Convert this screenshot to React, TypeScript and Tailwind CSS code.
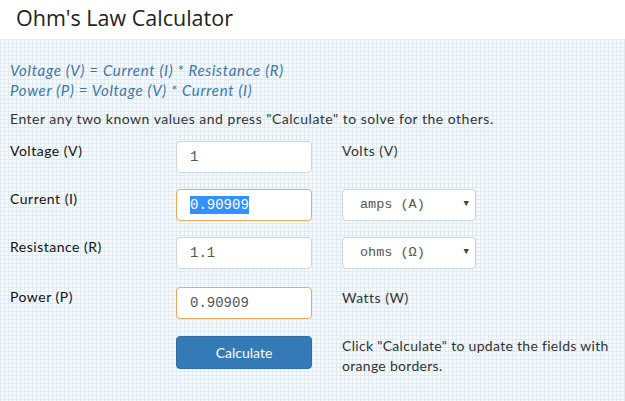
const hand = "font-['Lato','Open_Sans',sans-serif]";
const mono = "font-['Liberation_Mono','DejaVu_Sans_Mono',monospace]";

function Field({ value, orange, selected }: { value: string; orange?: boolean; selected?: boolean }) {
  return (
    <div
      className={`w-[136px] h-[32px] rounded-[4px] bg-white border flex items-center pl-[13px] text-[14px] text-[#555] ${mono} ${
        orange ? "border-[#eaa95c]" : "border-[#d0d6db]"
      }`}
    >
      {selected ? <span className="bg-[#3390ff] text-white leading-[18px]">{value}</span> : value}
    </div>
  );
}

function Select({ value }: { value: string }) {
  return (
    <div className={`w-[134px] h-[32px] rounded-[4px] bg-white border border-[#d0d6db] flex items-center justify-between pl-[17px] pr-[6px] text-[13.5px] text-[#555] ${mono}`}>
      <span>{value}</span>
      <span className="text-[9px] text-[#444]">▼</span>
    </div>
  );
}

function Row({ label, children, right, className = "" }: { label: string; children: React.ReactNode; right: React.ReactNode; className?: string }) {
  return (
    <div className={`flex items-start ${className}`}>
      <div className="w-[166px] text-[14px] leading-[20px] tracking-[0.5px] text-[#111]">{label}</div>
      {children}
      <div className="ml-[30px]">{right}</div>
    </div>
  );
}

export default function App() {
  return (
    <div className={`w-[625px] h-[401px] overflow-hidden ${hand}`}>
      <div className="h-[39px] bg-white pl-[16px] pt-[3px] font-['Open_Sans',sans-serif] text-[21.5px] leading-[30px] text-[#222]">
        Ohm's Law Calculator
      </div>
      <div className="h-[362px] bg-[#f6fafd] bg-[linear-gradient(to_right,#dfeaf3_1px,transparent_1px),linear-gradient(to_bottom,#dfeaf3_1px,transparent_1px)] bg-[size:4px_4px] pl-[10px] pt-[21px]">
        <div className="italic text-[#3b77a9] text-[15px] leading-[20px] tracking-[0.7px]">
          <div>Voltage (V) = Current (I) * Resistance (R)</div>
          <div>Power (P) = Voltage (V) * Current (I)</div>
        </div>
        <div className="mt-[9px] text-[14px] leading-[20px] tracking-[0.5px] text-[#333]">
          Enter any two known values and press "Calculate" to solve for the others.
        </div>
        <Row className="mt-[12px]" label="Voltage (V)" right={<div className="text-[14px] leading-[20px] tracking-[0.5px] text-[#333]">Volts (V)</div>}>
          <Field value="1" />
        </Row>
        <Row className="mt-[16px]" label="Current (I)" right={<Select value="amps (A)" />}>
          <Field value="0.90909" orange selected />
        </Row>
        <Row className="mt-[16px]" label="Resistance (R)" right={<Select value="ohms (Ω)" />}>
          <Field value="1.1" />
        </Row>
        <Row className="mt-[18px]" label="Power (P)" right={<div className="pt-[1px] text-[14px] leading-[20px] tracking-[0.5px] text-[#333]">Watts (W)</div>}>
          <Field value="0.90909" orange />
        </Row>
        <div className="mt-[17px] flex items-start">
          <div className="w-[166px]" />
          <button className="w-[136px] h-[33px] rounded-[4px] bg-[#337ab7] border border-[#2e6da4] text-white text-[14px]">
            Calculate
          </button>
          <div className="ml-[30px] w-[283px] text-[14px] leading-[20px] tracking-[0.3px] text-[#333]">
            Click "Calculate" to update the fields with orange borders.
          </div>
        </div>
      </div>
    </div>
  );
}
